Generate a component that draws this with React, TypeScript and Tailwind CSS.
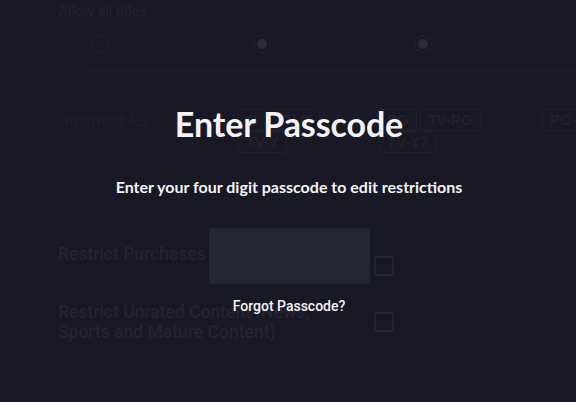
const RATINGS = [
  { left: ["G", "TV-G"], below: "TV-Y", width: "w-[141px]" },
  { left: ["PG", "TV-PG"], below: "TV-Y7", width: "w-[163px]" },
  { left: ["PG-13"], below: "", width: "w-[100px]" },
];

function Radio({ filled, red }: { filled?: boolean; red?: boolean }) {
  return (
    <span
      className={`flex h-[18px] w-[18px] shrink-0 items-center justify-center rounded-full border ${
        red ? "border-[#281d27]" : "border-[#22212e]"
      }`}
    >
      {filled && <span className="h-[10px] w-[10px] rounded-full bg-[#2a2a38]" />}
    </span>
  );
}

function Box({ label }: { label: string }) {
  return (
    <span className="flex h-[22px] shrink-0 items-center rounded-[2px] border border-[#1f1e2a] px-[7px] text-[15px] font-bold text-[#22212d]">
      {label}
    </span>
  );
}

export default function App() {
  return (
    <div className="relative h-[402px] w-[576px] overflow-hidden bg-[#191825] font-['Liberation_Sans',sans-serif]">
      {/* dimmed settings page */}
      <div className="pl-[58px] pt-[3px]">
        <div className="text-[14px] font-bold leading-[16px] tracking-[-0.3px] text-[#22212d]">Allow all titles</div>
        <div className="mt-[16px] flex items-center pl-[33px]">
          <Radio red />
          <span className="w-[144px] shrink-0" />
          <Radio filled />
          <span className="w-[143px] shrink-0" />
          <Radio filled />
          <span className="w-[144px] shrink-0" />
          <Radio filled />
        </div>
        <div className="ml-[31px] mt-[18px] h-px bg-[#211d26]" />
        <div className="mt-[37px] flex">
          <div className="w-[180px] shrink-0 pl-[7px] pt-[4px] text-[12px] font-bold uppercase text-[#1f1e2a]">Restrict all</div>
          {RATINGS.map((r, i) => (
            <div key={i} className={`flex shrink-0 flex-col items-start ${r.width}`}>
              <div className="flex gap-[3px]">
                {r.left.map((l) => (
                  <Box key={l} label={l} />
                ))}
              </div>
              {r.below && <Box label={r.below} />}
            </div>
          ))}
        </div>
        <div className="mt-[90px] flex w-[336px] items-start justify-between">
          <span className="font-['Roboto',sans-serif] text-[17.5px] font-medium leading-[22px] text-[#252431]">Restrict Purchases</span>
          <span className="mt-[13px] h-[20px] w-[20px] shrink-0 rounded-[3px] border-2 border-[#252432]" />
        </div>
        <div className="mt-[26px] flex w-[336px] items-start justify-between">
          <span className="font-['Roboto',sans-serif] text-[17.5px] font-medium leading-[20px] text-[#252431]">
            Restrict Unrated Content (News,
            <br />
            Sports and Mature Content)
          </span>
          <span className="mt-[10px] h-[20px] w-[20px] shrink-0 rounded-[3px] border-2 border-[#252432]" />
        </div>
      </div>

      {/* passcode overlay */}
      <div className="absolute inset-0 flex flex-col items-center pl-[2px] pt-[104px] text-[#f3f3f5]">
        <h1 className="font-['Lato',sans-serif] text-[34px] font-bold leading-[40px] tracking-[-0.1px]">Enter Passcode</h1>
        <p className="mt-[33px] font-['Lato',sans-serif] text-[16px] font-bold leading-[20px]">
          Enter your four digit passcode to edit restrictions
        </p>
        <div className="mt-[31px] h-[56px] w-[161px] rounded-[4px] bg-[#262735]" />
        <button className="mt-[13px] font-['Roboto',sans-serif] text-[14px] font-medium leading-[18px] text-[#f3f3f5]">
          Forgot Passcode?
        </button>
      </div>
    </div>
  );
}
